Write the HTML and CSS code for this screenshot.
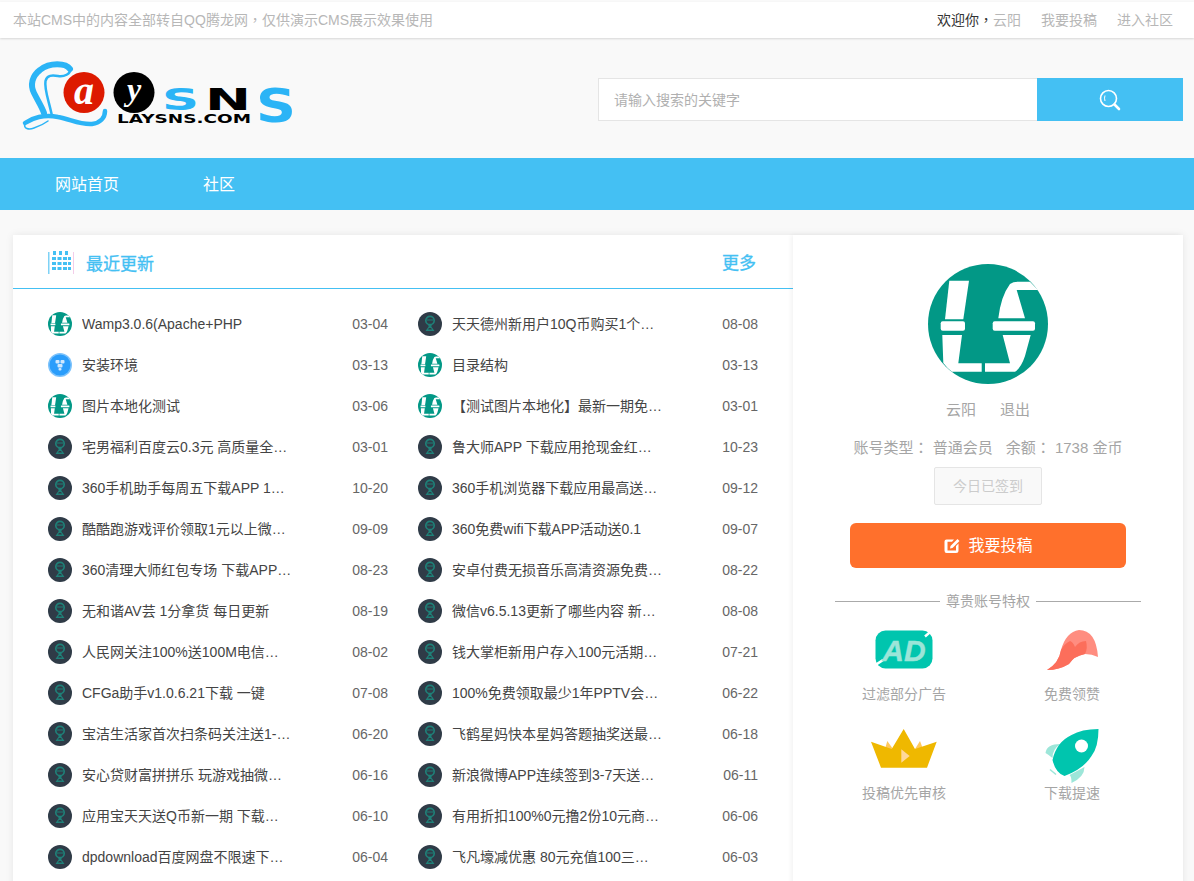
FILE: index.html
```html
<!DOCTYPE html>
<html lang="zh-CN">
<head>
<meta charset="utf-8">
<title>LaySNS</title>
<link rel="stylesheet" href="styles.css">
</head>
<body>
<svg class="defs" width="0" height="0" aria-hidden="true">
  <symbol id="ls" viewBox="0 0 120 120">
    <circle cx="60" cy="60" r="60" fill="#029886"/>
    <g fill="#fff">
      <path d="M21.3 16.700H41L35.300 55.300H17Z"/>
      <rect x="12.700" y="57.300" width="24.300" height="9.400" rx="2"/>
      <path d="M14.300 71H34L30.300 99.300H53.700V107.700H24Q19 104 15.300 99Z"/>
      <path d="M70.300 54.300Q73 32 82 20Q85 17.700 90 17.700H102L110 26H88.700L97 54.300Z"/>
      <rect x="64.700" y="57.300" width="42.300" height="9.400" rx="2"/>
      <path d="M74.700 71H102.700L97 92Q93 104 87 107.700H57V99.300H82Z"/>
    </g>
  </symbol>
  <symbol id="dark" viewBox="0 0 24 24">
    <circle cx="12" cy="12" r="12" fill="#2f3b47"/>
    <circle cx="12" cy="8.500" r="4.200" fill="none" stroke="#1f8078" stroke-width="1.700"/>
    <path d="M10 12.500H14L13.300 14.500L16.500 19H7.500L10.700 14.500Z" fill="#1f8078"/>
    <path d="M11 16H13L14 17.600H10Z" fill="#2f3b47"/>
    <path d="M9 8H15" stroke="#1f8078" stroke-width="1"/>
  </symbol>
  <symbol id="blue" viewBox="0 0 24 24">
    <circle cx="12" cy="12" r="12" fill="#7cc2fb"/>
    <circle cx="12" cy="12" r="10.500" fill="#2a9dfb"/>
    <g fill="#cfe8fe">
      <rect x="7.500" y="7" width="4" height="3.500" rx="1"/>
      <rect x="12.500" y="7" width="4" height="3.500" rx="1"/>
      <rect x="9.500" y="11" width="5" height="3.500" rx="1"/>
      <rect x="10.500" y="15" width="3" height="2.500" rx="1"/>
    </g>
  </symbol>
</svg>

<header class="topbar">
  <span class="notice">本站CMS中的内容全部转自QQ腾龙网<span class="cp" lang="zh-TW">，</span>仅供演示CMS展示效果使用</span>
  <nav class="toplinks">
    <span class="welcome">欢迎你<span class="cp" lang="zh-TW">，</span><a class="name">云阳</a></span>
    <a>我要投稿</a>
    <a>进入社区</a>
  </nav>
</header>

<section class="brand">
  <svg class="logo" width="290" height="76" viewBox="0 0 290 76">
    <g fill="none" stroke="#2bb4f6" stroke-linecap="round">
      <path d="M50 8C46 2 30 1 20 9C12 15 10 24 14 32C18 40 22 46 24 52" stroke-width="6"/>
      <path d="M50 8C51 13 44 16 38 15C32 14 27 14 25.500 20C24 28 29 40 32 55" stroke-width="2.500"/>
      <path d="M5 62C12 57 24 53 38 56C50 58 60 64 72 63C80 62 85 57 85 50" stroke-width="4.500"/>
      <path d="M5 62C3 68 9 69 14 67C20 65 24 63 28 60" stroke-width="1.500"/>
    </g>
    <circle cx="64" cy="31.500" r="20.500" fill="#dd1a00"/>
    <text class="logo-script" x="64" y="43" text-anchor="middle" font-size="40" fill="#fff">a</text>
    <circle cx="114" cy="31.500" r="20.500" fill="#000"/>
    <text class="logo-script" x="114" y="39" text-anchor="middle" font-size="32" fill="#fff">y</text>
    <text class="logo-wide" x="142" y="49" font-size="30" textLength="37" lengthAdjust="spacingAndGlyphs" fill="#2bb4f6">S</text>
    <text class="logo-wide" x="185" y="49" font-size="30" textLength="46" lengthAdjust="spacingAndGlyphs" fill="#000">N</text>
    <text class="logo-wide" x="236" y="61" font-size="47" textLength="40" lengthAdjust="spacingAndGlyphs" fill="#2bb4f6">S</text>
    <text class="logo-wide" x="97" y="61.500" font-size="12" textLength="134" lengthAdjust="spacingAndGlyphs" fill="#000">LAYSNS.COM</text>
  </svg>
  <form class="search">
    <input class="search-input" type="text" placeholder="请输入搜索的关键字">
    <button class="search-btn" type="button" aria-label="搜索">
      <svg width="22" height="22" viewBox="0 0 22 22" fill="none" stroke="#fff">
        <circle cx="9.500" cy="9.500" r="8" stroke-width="1.600"/>
        <path d="M6 6.500Q5 9 6 12" stroke-width="1"/>
        <path d="M15.500 15.500L20 20" stroke-width="2.600" stroke-linecap="round"/>
      </svg>
    </button>
  </form>
</section>

<nav class="mainnav">
  <a>网站首页</a>
  <a>社区</a>
</nav>

<main class="card">
  <section class="updates">
    <div class="updates-head">
      <svg class="cal" width="26" height="24" viewBox="0 0 26 24">
        <rect x="0" y="1" width="1.500" height="22" fill="#7ed2f6"/>
        <rect x="25" y="1" width="1.500" height="22" fill="#f3cde9"/>
        <g fill="#44c0f3">
          <rect x="5" y="0" width="3" height="4"/><rect x="11" y="0" width="3" height="4"/><rect x="17" y="0" width="3" height="4"/>
          <rect x="4" y="6" width="4" height="3"/><rect x="9.500" y="6" width="4" height="3"/><rect x="15" y="6" width="4" height="3"/><rect x="20" y="6" width="3" height="3"/>
          <rect x="4" y="11" width="4" height="3"/><rect x="9.500" y="11" width="4" height="3"/><rect x="15" y="11" width="4" height="3"/><rect x="20" y="11" width="3" height="3"/>
          <rect x="4" y="16" width="4" height="3"/><rect x="9.500" y="16" width="4" height="3"/><rect x="15" y="16" width="4" height="3"/><rect x="20" y="16" width="3" height="3"/>
        </g>
      </svg>
      <h2 class="updates-title">最近更新</h2>
      <a class="more">更多</a>
    </div>
    <ul class="list">
      <li class="row"><svg class="ico"><use href="#ls"/></svg><a class="title">Wamp3.0.6(Apache+PHP</a><time class="date">03-04</time></li>
      <li class="row"><svg class="ico"><use href="#dark"/></svg><a class="title">天天德州新用户10Q币购买1个月会员</a><time class="date">08-08</time></li>
      <li class="row"><svg class="ico"><use href="#blue"/></svg><a class="title">安装环境</a><time class="date">03-13</time></li>
      <li class="row"><svg class="ico"><use href="#ls"/></svg><a class="title">目录结构</a><time class="date">03-13</time></li>
      <li class="row"><svg class="ico"><use href="#ls"/></svg><a class="title">图片本地化测试</a><time class="date">03-06</time></li>
      <li class="row"><svg class="ico"><use href="#ls"/></svg><a class="title">【测试图片本地化】最新一期免费领取活动</a><time class="date">03-01</time></li>
      <li class="row"><svg class="ico"><use href="#dark"/></svg><a class="title">宅男福利百度云0.3元 高质量全部资源</a><time class="date">03-01</time></li>
      <li class="row"><svg class="ico"><use href="#dark"/></svg><a class="title">鲁大师APP 下载应用抢现金红包活动</a><time class="date">10-23</time></li>
      <li class="row"><svg class="ico"><use href="#dark"/></svg><a class="title">360手机助手每周五下载APP 1元话费活动</a><time class="date">10-20</time></li>
      <li class="row"><svg class="ico"><use href="#dark"/></svg><a class="title">360手机浏览器下载应用最高送话费活动</a><time class="date">09-12</time></li>
      <li class="row"><svg class="ico"><use href="#dark"/></svg><a class="title">酷酷跑游戏评价领取1元以上微信红包</a><time class="date">09-09</time></li>
      <li class="row"><svg class="ico"><use href="#dark"/></svg><a class="title">360免费wifi下载APP活动送0.1</a><time class="date">09-07</time></li>
      <li class="row"><svg class="ico"><use href="#dark"/></svg><a class="title">360清理大师红包专场 下载APP领红包</a><time class="date">08-23</time></li>
      <li class="row"><svg class="ico"><use href="#dark"/></svg><a class="title">安卓付费无损音乐高清资源免费下载地址</a><time class="date">08-22</time></li>
      <li class="row"><svg class="ico"><use href="#dark"/></svg><a class="title">无和谐AV芸 1分拿货 每日更新</a><time class="date">08-19</time></li>
      <li class="row"><svg class="ico"><use href="#dark"/></svg><a class="title">微信v6.5.13更新了哪些内容 新版本介绍</a><time class="date">08-08</time></li>
      <li class="row"><svg class="ico"><use href="#dark"/></svg><a class="title">人民网关注100%送100M电信流量活动</a><time class="date">08-02</time></li>
      <li class="row"><svg class="ico"><use href="#dark"/></svg><a class="title">钱大掌柜新用户存入100元活期送现金</a><time class="date">07-21</time></li>
      <li class="row"><svg class="ico"><use href="#dark"/></svg><a class="title">CFGa助手v1.0.6.21下载 一键</a><time class="date">07-08</time></li>
      <li class="row"><svg class="ico"><use href="#dark"/></svg><a class="title">100%免费领取最少1年PPTV会员活动</a><time class="date">06-22</time></li>
      <li class="row"><svg class="ico"><use href="#dark"/></svg><a class="title">宝洁生活家首次扫条码关注送1-5元红包</a><time class="date">06-20</time></li>
      <li class="row"><svg class="ico"><use href="#dark"/></svg><a class="title">飞鹤星妈快本星妈答题抽奖送最高奖品</a><time class="date">06-18</time></li>
      <li class="row"><svg class="ico"><use href="#dark"/></svg><a class="title">安心贷财富拼拼乐 玩游戏抽微信红包</a><time class="date">06-16</time></li>
      <li class="row"><svg class="ico"><use href="#dark"/></svg><a class="title">新浪微博APP连续签到3-7天送会员活动</a><time class="date">06-11</time></li>
      <li class="row"><svg class="ico"><use href="#dark"/></svg><a class="title">应用宝天天送Q币新一期 下载应用领取</a><time class="date">06-10</time></li>
      <li class="row"><svg class="ico"><use href="#dark"/></svg><a class="title">有用折扣100%0元撸2份10元商品活动</a><time class="date">06-06</time></li>
      <li class="row"><svg class="ico"><use href="#dark"/></svg><a class="title">dpdownload百度网盘不限速下载工具</a><time class="date">06-04</time></li>
      <li class="row"><svg class="ico"><use href="#dark"/></svg><a class="title">飞凡壕减优惠 80元充值100三网话费</a><time class="date">06-03</time></li>
    </ul>
  </section>

  <aside class="profile">
    <svg class="avatar"><use href="#ls"/></svg>
    <p class="who"><a>云阳</a><a>退出</a></p>
    <p class="account"><span>账号类型<span class="cp" lang="zh-TW">：</span> 普通会员</span><span>余额<span class="cp" lang="zh-TW">：</span> 1738 金币</span></p>
    <button class="signed" type="button">今日已签到</button>
    <button class="submit" type="button">
      <svg width="18" height="18" viewBox="0 0 18 18">
        <path d="M3.500 2.500H11L9 4.800H4.500V13.500H13V9L15.500 6.500V13.500Q15.500 16 13 16H3.500Q1.500 16 1.500 13.500V4.500Q1.500 2.500 3.500 2.500Z" fill="#fff"/>
        <path d="M7 11.500L7.500 9L14.500 2L16.500 4L9.500 11Z" fill="#fff"/>
      </svg>
      我要投稿
    </button>
    <div class="divider"><span>尊贵账号特权</span></div>
    <div class="perks">
      <div class="perk">
        <svg class="perk-ico" width="58" height="39" viewBox="0 0 58 39">
          <rect x="0.500" y="0.500" width="57" height="38" rx="10" fill="#00c5ae"/>
          <path d="M50 6.500L57.500 0M0.500 35L8 30" stroke="#fff" stroke-width="2.500"/>
          <text class="ad" x="29" y="30.500" text-anchor="middle" font-size="30" fill="#9be5d8">AD</text>
        </svg>
        <span>过滤部分广告</span>
      </div>
      <div class="perk">
        <svg class="perk-ico" width="52" height="40" viewBox="-1 0 52 40">
          <path d="M0 40Q12 33 14 20Q19 2 32 0Q49 0 51 27Q45 24 38 24Q27 26 22 34Q12 40 0 40Z" fill="#ff8d80"/>
          <path d="M0 40Q12 33 14 20Q17 14 23 11Q26 12 28 17Q32 11 39 11Q41 18 38 24Q27 26 22 34Q12 40 0 40Z" fill="#fc6e5b"/>
        </svg>
        <span>免费领赞</span>
      </div>
      <div class="perk">
        <svg class="perk-ico" width="66" height="39" viewBox="0 0 66 39">
          <path d="M16.300 12L22 20H14ZM49 12L52 20H44Z" fill="#ffc95c"/>
          <path d="M0 12.700L20.700 20L32.700 0L44 20L65.700 12.700L56 38.700H10Z" fill="#efb800"/>
          <path d="M30.300 20.300L38.700 27L30.300 33.700Z" fill="#ffd89a"/>
        </svg>
        <span>投稿优先审核</span>
      </div>
      <div class="perk">
        <svg class="perk-ico" width="55" height="55" viewBox="1 0 55 55">
          <path d="M2 24Q3 15 17 15Q9 20 9 29Q4 25 2 24Z" fill="#9de6d9"/>
          <path d="M41 38Q41 48 28 54Q28 47 26 46Z" fill="#9de6d9"/>
          <path d="M7 40L13 45L12 46L6 41Z" fill="#9de6d9"/>
          <path d="M9 31Q13 13 28 6Q38 0 55 0Q55 18 48 27Q40 40 21 47Q12 44 9 31Z" fill="#00c5ae"/>
          <circle cx="38" cy="17" r="6.500" fill="#fff"/>
        </svg>
        <span>下载提速</span>
      </div>
    </div>
  </aside>
</main>
</body>
</html>
```

FILE: styles.css
```css
* { box-sizing: border-box; }
html, body { height: 100%; }
body {
  margin: 0;
  overflow: hidden;
  background: #f9f9f9;
  color: #333;
  font: 14px/20px "Liberation Sans", "Noto Sans CJK SC", sans-serif;
}
a { color: inherit; text-decoration: none; }
p, h2, ul { margin: 0; padding: 0; }
.defs { position: absolute; }
.cp { font-family: "Noto Sans CJK TC", sans-serif; line-height: 1; }

.topbar {
  display: flex;
  justify-content: space-between;
  align-items: center;
  height: 36px;
  margin-top: 2px;
  padding: 0 21px 0 13px;
  background: #fff;
  color: #b7b7b7;
  box-shadow: 0 1px 2px rgba(0, 0, 0, .14);
  position: relative;
}
.toplinks { display: flex; gap: 20px; }
.welcome { color: #333; }
.name { color: #b7b7b7; }

.brand {
  display: flex;
  align-items: center;
  justify-content: space-between;
  height: 120px;
  padding: 0 11px 0 20px;
  background: #f9f9f9;
}
.logo { display: block; margin-top: 1px; }
.logo-script { font-family: "Liberation Serif", serif; font-style: italic; font-weight: 700; }
.logo-wide { font-family: "DejaVu Sans", sans-serif; font-weight: 700; }
.search { display: flex; width: 585px; height: 43px; margin-top: 3px; }
.search-input {
  flex: 1;
  min-width: 0;
  padding: 1px 15px 0;
  border: 1px solid #e5e5e5;
  border-right: 0;
  background: #fff;
  font: inherit;
  outline: 0;
}
.search-input::placeholder { color: #b0b0b0; opacity: 1; }
.search-btn {
  display: flex;
  align-items: center;
  justify-content: center;
  width: 146px;
  padding: 0;
  border: 0;
  background: #44c0f3;
}

.mainnav {
  display: flex;
  gap: 84px;
  align-items: center;
  height: 52px;
  padding: 2px 0 0 55px;
  background: #44c0f3;
  color: #fff;
  font-size: 16px;
}

.card {
  display: flex;
  height: 700px;
  margin: 25px 11px 0 13px;
  background: #fff;
  box-shadow: 0 0 8px rgba(0, 0, 0, .08);
}
.updates { width: 780px; }
.updates-head {
  display: flex;
  align-items: center;
  height: 54px;
  padding: 0 37px 0 35px;
  border-bottom: 1px solid #44c0f3;
  color: #44c0f3;
}
.cal { display: block; margin-top: 3px; }
.updates-title {
  margin: 7px 0 0 12px;
  font-size: 17px;
  font-weight: 400;
  -webkit-text-stroke: .3px #44c0f3;
}
.more {
  margin: 4px 0 0 auto;
  font-size: 17px;
  -webkit-text-stroke: .3px #44c0f3;
}
.list {
  display: grid;
  grid-template-columns: 370px 370px;
  grid-auto-rows: 41px;
  padding: 14px 0 0 35px;
  list-style: none;
}
.row {
  display: flex;
  align-items: center;
  width: 340px;
}
.ico { flex: none; width: 24px; height: 24px; margin-right: 10px; }
.title {
  width: 210px;
  overflow: hidden;
  white-space: nowrap;
  text-overflow: ellipsis;
  color: #444;
}
.date { margin-left: auto; color: #666; }

.profile {
  width: 390px;
  padding: 29px 0 0;
  display: flex;
  flex-direction: column;
  align-items: center;
  box-shadow: -2px 0 4px rgba(0, 0, 0, .05);
  color: #a5a5a5;
}
.avatar { display: block; width: 120px; height: 120px; flex: none; }
.who { display: flex; gap: 24px; margin-top: 16px; font-size: 15px; }
.account { display: flex; gap: 13px; margin-top: 18px; font-size: 15px; }
.signed {
  width: 108px;
  height: 38px;
  margin-top: 9px;
  border: 1px solid #e5e5e5;
  border-radius: 2px;
  background: #f9f9f9;
  color: #ccc;
  font: inherit;
}
.submit {
  display: flex;
  align-items: center;
  justify-content: center;
  gap: 7px;
  flex: none;
  width: 276px;
  height: 45px;
  margin-top: 18px;
  border: 0;
  border-radius: 6px;
  background: #ff702c;
  color: #fff;
  font: 16px/20px "Liberation Sans", "Noto Sans CJK SC", sans-serif;
}
.divider {
  display: flex;
  align-items: center;
  gap: 6px;
  width: 306px;
  margin-top: 23px;
}
.divider::before, .divider::after {
  content: "";
  flex: 1;
  height: 1px;
  background: #aaa;
}
.perks {
  display: grid;
  grid-template-columns: 168px 168px;
  grid-auto-rows: 74px;
  row-gap: 25px;
  margin-top: 19px;
}
.perk {
  display: flex;
  flex-direction: column;
  align-items: center;
  justify-content: flex-end;
  position: relative;
}
.perk-ico { position: absolute; top: 0; left: 50%; transform: translateX(-50%); }
.ad { font-family: "Liberation Sans", sans-serif; font-style: italic; font-weight: 700; stroke: #9be5d8; stroke-width: .4px; }
```
